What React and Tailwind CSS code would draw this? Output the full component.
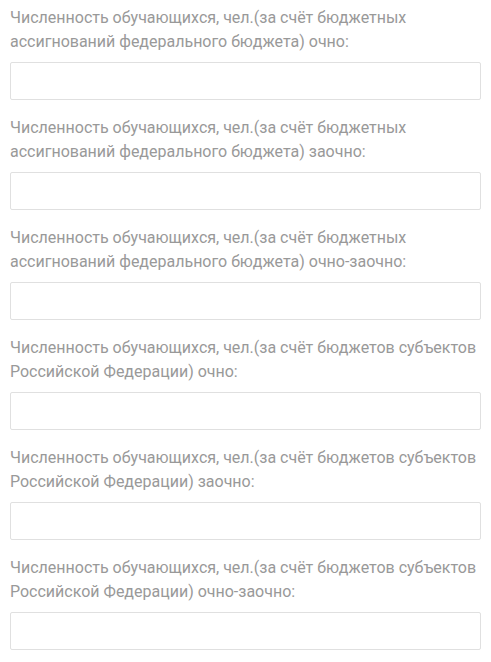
const fields = [
  'Численность обучающихся, чел.(за счёт бюджетных ассигнований федерального бюджета) очно:',
  'Численность обучающихся, чел.(за счёт бюджетных ассигнований федерального бюджета) заочно:',
  'Численность обучающихся, чел.(за счёт бюджетных ассигнований федерального бюджета) очно-заочно:',
  'Численность обучающихся, чел.(за счёт бюджетов субъектов Российской Федерации) очно:',
  'Численность обучающихся, чел.(за счёт бюджетов субъектов Российской Федерации) заочно:',
  'Численность обучающихся, чел.(за счёт бюджетов субъектов Российской Федерации) очно-заочно:',
]

export default function App () {
  return (
    <div className="bg-white px-[10px] pt-[6px] font-['Roboto',sans-serif]">
      {fields.map((label, i) => (
        <div key={i} className="mb-4">
          <label className="block text-[16px] leading-6 text-[#999999] mb-2">{label}</label>
          <input type="text" className="block w-full h-[38px] rounded-[2px] border border-[#e0e0e0] bg-white px-3 text-[15px] outline-none" />
        </div>
      ))}
    </div>
  )
}
